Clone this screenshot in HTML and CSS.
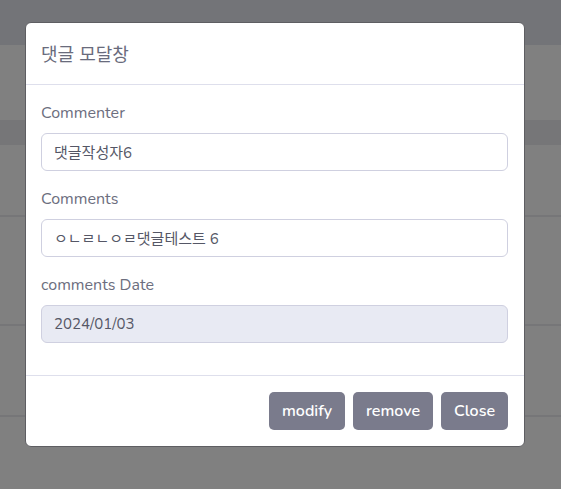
FILE: index.html
```html
<!DOCTYPE html>
<html lang="ko">
<head>
<meta charset="utf-8">
<link rel="stylesheet" href="styles.css">
</head>
<body>
<div class="backdrop">
  <div class="band band-top"></div>
  <div class="band band-a"></div>
  <div class="band band-dark"></div>
  <div class="band band-b"></div>
  <div class="band band-c"></div>
  <div class="band band-d"></div>
  <div class="band band-e"></div>
</div>
<div class="modal">
  <div class="modal-header">
    <h5 class="modal-title">댓글 모달창</h5>
  </div>
  <div class="modal-body">
    <div class="field">
      <label class="label">Commenter</label>
      <div class="input">댓글작성자6</div>
    </div>
    <div class="field">
      <label class="label">Comments</label>
      <div class="input">ㅇㄴㄹㄴㅇㄹ댓글테스트 6</div>
    </div>
    <div class="field">
      <label class="label">comments Date</label>
      <div class="input input-readonly">2024/01/03</div>
    </div>
  </div>
  <div class="modal-footer">
    <button class="btn">modify</button>
    <button class="btn">remove</button>
    <button class="btn">Close</button>
  </div>
</div>
</body>
</html>
```

FILE: styles.css
```css
html, body {
  margin: 0;
  padding: 0;
  width: 561px;
  height: 489px;
  overflow: hidden;
  background: #808080;
  font-family: "Nunito", "Lato", "Noto Sans CJK KR", sans-serif;
}
.backdrop {
  display: flex;
  flex-direction: column;
}
.band { background: #808080; }
.band-top { height: 45px; background: #737478; }
.band-a { height: 75px; }
.band-dark { height: 25px; background: #767678; }
.band-b { height: 70px; border-bottom: 2px solid #767678; }
.band-c { height: 107px; border-bottom: 2px solid #767678; }
.band-d { height: 89px; border-bottom: 2px solid #767678; }
.modal {
  position: absolute;
  left: 25px;
  top: 22px;
  width: 498px;
  background: #fff;
  border: 1px solid #5e5e62;
  border-radius: 6px;
  color: #6c6e7e;
}
.modal-header {
  padding: 16px 15px;
  border-bottom: 1px solid #dedfec;
}
.modal-title {
  margin: 0;
  font-family: "Noto Sans CJK KR", sans-serif;
  font-weight: 400;
  font-size: 18px;
  line-height: 29px;
  color: #696b7c;
}
.modal-body {
  padding: 16px 16px 16px 15px;
  display: flex;
  flex-direction: column;
  gap: 16px;
}
.field {
  display: flex;
  flex-direction: column;
}
.label {
  font-size: 16px;
  line-height: 24px;
  margin-bottom: 8px;
  color: #6c6e7e;
}
.input {
  box-sizing: border-box;
  height: 38px;
  border: 1px solid #cfd0e0;
  border-radius: 6px;
  padding: 0 12px;
  display: flex;
  align-items: center;
  font-family: "Nunito", "Lato", "Noto Sans CJK KR", sans-serif;
  font-size: 15px;
  color: #555766;
}
.field:last-child {
  margin-bottom: 16px;
}
.input-readonly {
  background: #e8eaf3;
}
.modal-footer {
  border-top: 1px solid #dedfec;
  padding: 16px 16px 16px;
  display: flex;
  justify-content: flex-end;
  gap: 8px;
}
.btn {
  height: 38px;
  padding: 0 13px;
  border: none;
  border-radius: 5px;
  background: #7a7b8c;
  color: #fff;
  font-family: "Nunito", "Lato", sans-serif;
  font-weight: 600;
  font-size: 16px;
}
```
